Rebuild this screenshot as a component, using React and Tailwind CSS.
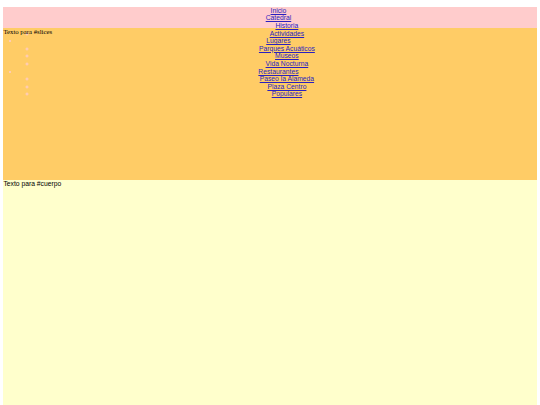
import React from "react";

const menu = [
  { label: "Inicio" },
  { label: "Catedral", sub: ["Historia", "Actividades"] },
  { label: "Lugares", sub: ["Parques Acuáticos", "Museos", "Vida Nocturna"] },
  { label: "Restaurantes", sub: ["Paseo la Alameda", "Plaza Centro", "Populares"] },
];

export default function App() {
  return (
    <div className="px-[3.4px] pt-[6.75px] bg-white min-h-[405px] font-['Liberation_Sans',Arial,sans-serif] text-[6.75px] leading-[7.6px] text-black">
      {/* Header */}
      <div className="h-[21.6px] bg-[#ffcccc]">
        <ul className="list-disc pl-[16.9px] text-center marker:text-[#ffcccc]">
          {menu.map((item) => (
            <li key={item.label}>
              <a href="#" className="text-[#2a1fc0] underline">{item.label}</a>
              {item.sub && (
                <ul className="list-[circle] pl-[16.9px]">
                  {item.sub.map((s) => (
                    <li key={s}>
                      <a href="#" className="text-[#2a1fc0] underline">{s}</a>
                    </li>
                  ))}
                </ul>
              )}
            </li>
          ))}
        </ul>
      </div>

      {/* #slices */}
      <div className="h-[152px] bg-[#ffcc66] font-['Liberation_Serif','Times_New_Roman',serif]">
        Texto para #slices
      </div>

      {/* #cuerpo */}
      <div className="h-[225px] bg-[#ffffcc]">
        Texto para #cuerpo
      </div>
    </div>
  );
}
